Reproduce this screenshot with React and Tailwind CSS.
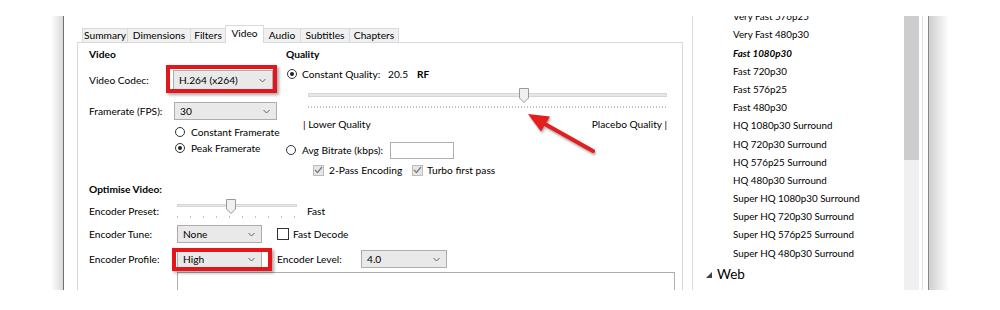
import React from 'react';

const Chevron = () => (
  <svg width="7" height="5" viewBox="0 0 7 5" className="shrink-0">
    <polyline points="0.5,1 3.5,4 6.5,1" fill="none" stroke="#606060" strokeWidth="1" />
  </svg>
);

function Select({ value, className }) {
  return (
    <div className={`flex items-center justify-between border border-[#adadad] bg-[#e9e9e9] pl-[5px] pr-[6px] ${className}`}>
      <span>{value}</span>
      <Chevron />
    </div>
  );
}

function Radio({ checked }) {
  return (
    <span className="flex h-[10px] w-[10px] shrink-0 items-center justify-center rounded-full border border-[#333] bg-white">
      {checked && <span className="h-[4px] w-[4px] rounded-full bg-[#222]" />}
    </span>
  );
}

function DisabledCheck() {
  return (
    <span className="flex h-[11px] w-[11px] shrink-0 items-center justify-center border border-[#bcbcbc] bg-[#e6e6e6]">
      <svg width="9" height="8" viewBox="0 0 9 8">
        <polyline points="1,4 3.5,6.5 8,1" fill="none" stroke="#7d7d7d" strokeWidth="1.3" />
      </svg>
    </span>
  );
}

function Thumb() {
  return (
    <svg width="10" height="15" viewBox="0 0 10 15" className="absolute">
      <polygon points="0.5,0.5 9.5,0.5 9.5,10 5,14.5 0.5,10" fill="#f0f0f0" stroke="#9a9a9a" />
    </svg>
  );
}

const tabs = [
  ['Summary', 46],
  ['Dimensions', 64],
  ['Filters', 36],
  ['Video', 39],
  ['Audio', 38],
  ['Subtitles', 50],
  ['Chapters', 50],
];

const presets = [
  'Very Fast 576p25',
  'Very Fast 480p30',
  'Fast 1080p30',
  'Fast 720p30',
  'Fast 576p25',
  'Fast 480p30',
  'HQ 1080p30 Surround',
  'HQ 720p30 Surround',
  'HQ 576p25 Surround',
  'HQ 480p30 Surround',
  'Super HQ 1080p30 Surround',
  'Super HQ 720p30 Surround',
  'Super HQ 576p25 Surround',
  'Super HQ 480p30 Surround',
];

export default function App() {
  return (
    <div className="relative h-[310px] w-[1000px] overflow-hidden whitespace-nowrap bg-white font-['Lato',sans-serif] text-[10.2px] leading-none text-black">
      <div className="flex pt-[16px]">
        <div className="ml-[51px] h-[274px] w-[12px] bg-gradient-to-r from-white to-[#dadada]" />
        <div className="h-[274px] w-px bg-[#707070]" />

        {/* window content */}
        <div className="flex h-[274px] w-[864px] overflow-hidden bg-white pl-[13px]">
          {/* tab control */}
          <div className="flex w-[606px] flex-col pt-[9px]">
            <div className="flex h-[17px] items-end pl-[6px]">
              {tabs.map(([name, w]) => {
                const sel = name === 'Video';
                return (
                  <div
                    key={name}
                    style={{ width: w }}
                    className={
                      sel
                        ? 'relative z-10 -mb-px -ml-px flex h-[18px] items-center justify-center border border-b-0 border-[#d9d9d9] bg-white pb-[2px]'
                        : '-ml-px flex h-[14px] items-center justify-center border border-b-0 border-[#d9d9d9] bg-[#f0f0f0]'
                    }
                  >
                    {name}
                  </div>
                );
              })}
            </div>

            <div className="flex-1 border border-[#d9d9d9] bg-white pl-[11px]">
              <div className="flex">
                {/* left column */}
                <div className="flex w-[197px] flex-col">
                  <div className="mt-[3px] flex h-[16px] items-center font-bold">Video</div>
                  <div className="mt-[8px] flex h-[20px] items-center">
                    <span className="w-[84px]">Video Codec:</span>
                    <Select value="H.264 (x264)" className="h-[20px] w-[100px]" />
                  </div>
                  <div className="mt-[12px] flex h-[18px] items-center">
                    <span className="w-[85px]">Framerate (FPS):</span>
                    <Select value="30" className="h-[18px] w-[103px]" />
                  </div>
                  <div className="mt-[4px] flex h-[16px] items-center gap-[6px] pl-[86px]">
                    <Radio />
                    <span>Constant Framerate</span>
                  </div>
                  <div className="flex h-[16px] items-center gap-[6px] pl-[86px]">
                    <Radio checked />
                    <span>Peak Framerate</span>
                  </div>
                </div>

                {/* quality column */}
                <div className="flex w-[381px] flex-col">
                  <div className="mt-[3px] flex h-[16px] items-center font-bold">Quality</div>
                  <div className="mt-[4px] flex h-[16px] items-center">
                    <span className="ml-px"><Radio checked /></span>
                    <span className="ml-[5px] w-[86px]">Constant Quality:</span>
                    <span className="w-[29px]">20.5</span>
                    <span className="font-bold">RF</span>
                  </div>
                  <div className="relative ml-[22px] mt-[4px] h-[24px] w-[359px]">
                    <div className="absolute left-0 right-0 top-[7px] h-[4px] border border-[#d6d6d6] bg-[#e7e7e7]" />
                    <div className="absolute left-[211px] top-[2px]"><Thumb /></div>
                    <div className="absolute left-0 right-0 top-[20px] h-[2px] bg-[repeating-linear-gradient(90deg,#c4c4c4_0_1px,transparent_1px_3px)]" />
                  </div>
                  <div className="mt-[6px] flex h-[16px] w-[381px] items-center justify-between pl-[17px]">
                    <span>| Lower Quality</span>
                    <span>Placebo Quality |</span>
                  </div>
                  <div className="mt-[9px] flex h-[18px] items-center">
                    <Radio />
                    <span className="ml-[6px] w-[88px]">Avg Bitrate (kbps):</span>
                    <span className="h-[17px] w-[64px] border border-[#abadb3] bg-white" />
                  </div>
                  <div className="mt-[3px] flex h-[16px] items-center pl-[27px]">
                    <DisabledCheck />
                    <span className="ml-[5px] w-[83px]">2-Pass Encoding</span>
                    <DisabledCheck />
                    <span className="ml-[4px]">Turbo first pass</span>
                  </div>
                </div>
              </div>

              <div className="mt-[3px] flex h-[16px] items-center font-bold">Optimise Video:</div>

              <div className="mt-[2px] flex h-[22px] items-start">
                <span className="mt-[7px] w-[88px]">Encoder Preset:</span>
                <div className="relative h-[22px] w-[120px]">
                  <div className="absolute left-0 right-0 top-[5px] h-[3px] border border-[#d6d6d6] bg-[#e7e7e7]" />
                  <div className="absolute left-[49px] top-0"><Thumb /></div>
                  <div className="absolute left-0 right-0 top-[17px] h-[2px] bg-[repeating-linear-gradient(90deg,#c4c4c4_0_1px,transparent_1px_13px)]" />
                </div>
                <span className="ml-[10px] mt-[7px]">Fast</span>
              </div>

              <div className="mt-[4px] flex h-[18px] items-center">
                <span className="w-[88px]">Encoder Tune:</span>
                <Select value="None" className="h-[18px] w-[85px]" />
                <span className="ml-[15px] h-[12px] w-[12px] border border-[#333] bg-white" />
                <span className="ml-[4px]">Fast Decode</span>
              </div>

              <div className="mt-[7px] flex h-[18px] items-center">
                <span className="w-[88px]">Encoder Profile:</span>
                <Select value="High" className="h-[18px] w-[85px]" />
                <span className="ml-[15px] w-[84px]">Encoder Level:</span>
                <Select value="4.0" className="h-[18px] w-[86px]" />
              </div>

              <div className="ml-[88px] mt-[4px] h-[40px] w-[498px] border border-[#abadb3] bg-white" />
            </div>
          </div>

          {/* preset list */}
          <div className="ml-[9px] w-[212px] overflow-hidden border-l border-[#dcdcdc] bg-white text-[9.8px]">
            <div className="-mt-[8px] flex flex-col pl-[40px]">
              {presets.map((p) => (
                <div
                  key={p}
                  className={`flex h-[18.2px] items-center ${p === 'Fast 1080p30' ? 'font-bold italic' : ''}`}
                >
                  {p}
                </div>
              ))}
              <div className="-ml-[27px] flex h-[24px] items-center gap-[5px] text-[13.5px]">
                <svg width="6" height="6" viewBox="0 0 6 6">
                  <polygon points="6,0 6,6 0,6" fill="#404040" />
                </svg>
                <span>Web</span>
              </div>
            </div>
          </div>

          {/* scrollbar */}
          <div className="flex w-[15px] flex-col bg-[#f0f0f0]">
            <div className="h-[144px] bg-[#cdcdcd]" />
          </div>
          <div className="w-[3px]" />
          <div className="w-px bg-[#dedeee]" />
          <div className="w-[5px]" />
        </div>

        <div className="h-[274px] w-px bg-[#888888]" />
        <div className="h-[274px] w-[20px] bg-gradient-to-r from-[#cfcfcf] to-white" />
      </div>

      {/* annotations */}
      <div className="absolute left-[166px] top-[65px] h-[28px] w-[111px] border-[4px] border-[#e3161b] shadow-[2px_2px_3px_rgba(0,0,0,0.35)]" />
      <div className="absolute left-[172px] top-[248px] h-[23px] w-[100px] border-[4px] border-[#e3161b] shadow-[2px_2px_3px_rgba(0,0,0,0.35)]" />
      <svg
        width="80"
        height="55"
        viewBox="0 0 80 55"
        className="absolute left-[520px] top-[105px] drop-shadow-[1px_2px_1px_rgba(0,0,0,0.35)]"
      >
        <line x1="73" y1="46" x2="24" y2="18.5" stroke="#e41e1e" strokeWidth="4" strokeLinecap="round" />
        <polygon points="8,9 30,11.5 21,26.5" fill="#e41e1e" />
      </svg>
    </div>
  );
}
